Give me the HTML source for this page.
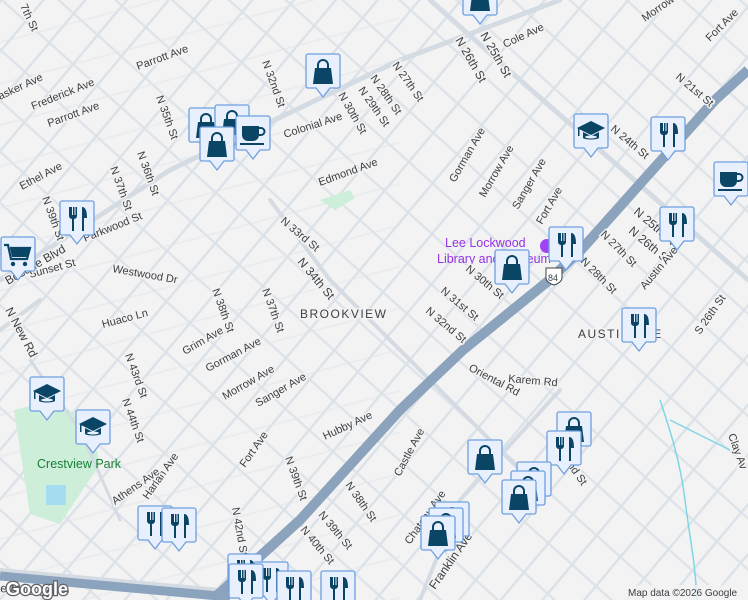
<!DOCTYPE html>
<html><head><meta charset="utf-8"><style>
html,body{margin:0;padding:0;width:748px;height:600px;overflow:hidden;background:#f4f3f4}
svg{display:block}
text{font-family:"Liberation Sans",sans-serif;font-size:11px;fill:#3c4043}
.l{stroke:#f4f3f4;stroke-width:3;paint-order:stroke}
</style></head><body>
<svg width="748" height="600" viewBox="0 0 748 600" xmlns="http://www.w3.org/2000/svg">
<defs>
<pattern id="pa" width="32" height="32" patternUnits="userSpaceOnUse" patternTransform="rotate(40)">
<rect x="0" y="0" width="2.5" height="32" fill="#dbe2e8"/></pattern>
<pattern id="pb" width="38" height="38" patternUnits="userSpaceOnUse" patternTransform="rotate(-48)">
<rect x="0" y="0" width="2.5" height="38" fill="#dbe2e8"/></pattern>
<pattern id="pc" width="40" height="40" patternUnits="userSpaceOnUse" patternTransform="rotate(-15)">
<rect x="0" y="0" width="40" height="2" fill="#dfe5ea"/></pattern>
<symbol id="mk" viewBox="0 0 36 46"><path d="M3 1h30a2 2 0 0 1 2 2v30a2 2 0 0 1-2 2h-8l-7 9-7-9H3a2 2 0 0 1-2-2V3a2 2 0 0 1 2-2z" fill="#e8f0fe" stroke="#6f9fe0" stroke-width="1.3"/></symbol>
<g id="shop"><use href="#mk" width="36" height="46"/><path d="M10 15h16l2 16H8z" fill="#0b4566"/><path d="M13 16v-4a5 5 0 0 1 10 0v4" fill="none" stroke="#0b4566" stroke-width="2"/></g>
<g id="food"><use href="#mk" width="36" height="46"/><path d="M10 7v9a3 3 0 0 0 3 3v12h2V19a3 3 0 0 0 3-3V7h-1.5v8h-1V7h-1.5v8h-1V7z" fill="#0b4566"/><path d="M23 31V7c4 0 5 5 5 11h-3v13z" fill="#0b4566"/></g>
<g id="cafe"><use href="#mk" width="36" height="46"/><path d="M7 11h17v9a6 6 0 0 1-6 6h-5a6 6 0 0 1-6-6z" fill="#0b4566"/><path d="M24 13h2a3 3 0 0 1 0 7h-2" fill="none" stroke="#0b4566" stroke-width="2"/><rect x="5" y="28" width="24" height="2" fill="#0b4566"/></g>
<g id="school"><use href="#mk" width="36" height="46"/><path d="M18 8L4 15l14 7 14-7z" fill="#0b4566"/><path d="M10 19v6c2 2 14 2 16 0v-6l-8 4z" fill="#0b4566"/><ellipse cx="18" cy="24" rx="6" ry="1.5" fill="#e8f0fe"/><rect x="5" y="15" width="1.5" height="8" fill="#0b4566"/></g>
<g id="cart"><use href="#mk" width="36" height="46"/><path d="M4 9h4l3 14h16l3-11H10" fill="none" stroke="#0b4566" stroke-width="2.2"/><path d="M10 12h19l-2 9H12z" fill="#0b4566"/><circle cx="13" cy="28" r="2.2" fill="#0b4566"/><circle cx="25" cy="28" r="2.2" fill="#0b4566"/></g>
</defs>
<rect width="748" height="600" fill="#f4f3f4"/>
<rect width="748" height="600" fill="url(#pa)"/>
<rect width="748" height="600" fill="url(#pb)" opacity="0.9"/>
<rect x="0" y="0" width="400" height="600" fill="url(#pc)" opacity="0.5"/>
<path d="M14 410l40-10 36 24 10 40-40 60-30-10z" fill="#cdeed8"/>
<rect x="46" y="485" width="20" height="20" fill="#a6dcef"/>
<path d="M320 200l30-10 5 8-20 12z" fill="#cdeed8"/>
<g fill="none" stroke="#d4dbe3" stroke-linecap="round">
<path d="M0 280L170 170 400 60 560 0" stroke-width="5"/>
<path d="M0 330L40 300" stroke-width="4"/>
<path d="M270 200L330 280 430 380 520 470" stroke-width="4"/>
<path d="M430 0L520 80 600 150 748 280" stroke-width="5"/>
<path d="M30 360L80 430 120 520" stroke-width="3"/>
<path d="M0 570L220 590" stroke-width="4"/>
<path d="M560 390L460 500 420 600" stroke-width="4"/>
</g>
<path d="M0 576L230 597" stroke="#8ca3bd" stroke-width="9" fill="none"/>
<path d="M212 600L300 520 400 410 463 350 547 282 581 250 715 100 748 70" stroke="#8ca3bd" stroke-width="10" fill="none" stroke-linejoin="round"/>
<path d="M660 400c10 30 20 60 25 100s10 60 12 100M670 420l60 30" stroke="#7fd6e6" stroke-width="1.5" fill="none"/>
<g>
<text class="l" x="300" y="318" style="letter-spacing:1.5px;font-size:12px">BROOKVIEW</text>
<text class="l" x="578" y="338" style="letter-spacing:1.5px;font-size:12px">AUSTIN AVE</text>
<text x="445" y="247" style="fill:#9334e6;font-size:12.5px">Lee Lockwood</text>
<text x="437" y="263" style="fill:#9334e6;font-size:12.5px">Library and Museum</text>
<circle cx="547" cy="246" r="7" fill="#a142f4"/>
<text x="37" y="468" style="fill:#188038;font-size:12.5px">Crestview Park</text>
<text class="l" transform="translate(320,186) rotate(-20)">Edmond Ave</text>
<text class="l" transform="translate(285,138) rotate(-18)">Colonial Ave</text>
<text class="l" transform="translate(297,262) rotate(50)" style="font-size:12px">N 34th St</text>
<text class="l" transform="translate(280,222) rotate(40)">N 33rd St</text>
<text class="l" transform="translate(138,70) rotate(-20)">Parrott Ave</text>
<text class="l" transform="translate(49,127) rotate(-20)">Parrott Ave</text>
<text class="l" transform="translate(33,110) rotate(-22)">Frederick Ave</text>
<text class="l" transform="translate(0,100) rotate(-25)">asker Ave</text>
<text class="l" transform="translate(85,242) rotate(-22)">Parkwood St</text>
<text class="l" transform="translate(30,278) rotate(-15)">Sunset St</text>
<text class="l" transform="translate(112,272) rotate(10)">Westwood Dr</text>
<text class="l" transform="translate(103,328) rotate(-15)">Huaco Ln</text>
<text class="l" transform="translate(22,190) rotate(-28)">Ethel Ave</text>
<text class="l" transform="translate(8,285) rotate(-30)" style="font-size:12px">Bosque Blvd</text>
<text class="l" transform="translate(5,310) rotate(62)" style="font-size:12px">N New Rd</text>
<text class="l" transform="translate(185,355) rotate(-30)">Grim Ave</text>
<text class="l" transform="translate(208,372) rotate(-28)">Gorman Ave</text>
<text class="l" transform="translate(225,400) rotate(-30)">Morrow Ave</text>
<text class="l" transform="translate(258,407) rotate(-30)">Sanger Ave</text>
<text class="l" transform="translate(245,468) rotate(-55)">Fort Ave</text>
<text class="l" transform="translate(148,500) rotate(-55)">Harlan Ave</text>
<text class="l" transform="translate(115,505) rotate(-35)">Athens Ave</text>
<text class="l" transform="translate(325,440) rotate(-25)">Hubby Ave</text>
<text class="l" transform="translate(400,477) rotate(-62)">Castle Ave</text>
<text class="l" transform="translate(410,545) rotate(-55)">Chateau Ave</text>
<text class="l" transform="translate(435,590) rotate(-55)" style="font-size:12px">Franklin Ave</text>
<text class="l" transform="translate(468,370) rotate(28)">Oriental Rd</text>
<text class="l" transform="translate(508,382) rotate(5)">Karem Rd</text>
<text class="l" transform="translate(440,292) rotate(40)">N 31st St</text>
<text class="l" transform="translate(425,312) rotate(40)">N 32nd St</text>
<text class="l" transform="translate(465,270) rotate(40)">N 30th St</text>
<text class="l" transform="translate(455,183) rotate(-60)">Gorman Ave</text>
<text class="l" transform="translate(485,198) rotate(-60)">Morrow Ave</text>
<text class="l" transform="translate(518,210) rotate(-60)">Sanger Ave</text>
<text class="l" transform="translate(542,225) rotate(-60)">Fort Ave</text>
<text class="l" transform="translate(600,235) rotate(45)">N 27th St</text>
<text class="l" transform="translate(580,262) rotate(45)">N 28th St</text>
<text class="l" transform="translate(633,213) rotate(40)" style="font-size:12px">N 25th St</text>
<text class="l" transform="translate(628,232) rotate(40)" style="font-size:12px">N 26th St</text>
<text class="l" transform="translate(610,130) rotate(40)">N 24th St</text>
<text class="l" transform="translate(675,78) rotate(40)">N 21st St</text>
<text class="l" transform="translate(645,290) rotate(-50)">Austin Ave</text>
<text class="l" transform="translate(700,335) rotate(-55)">S 26th St</text>
<text class="l" transform="translate(728,435) rotate(70)">Clay Av</text>
<text class="l" transform="translate(505,48) rotate(-25)">Cole Ave</text>
<text class="l" transform="translate(645,22) rotate(-35)">Morrow Av</text>
<text class="l" transform="translate(710,42) rotate(-45)">Fort Ave</text>
<text class="l" transform="translate(455,40) rotate(60)" style="font-size:12px">N 26th St</text>
<text class="l" transform="translate(480,35) rotate(60)" style="font-size:12px">N 25th St</text>
<text class="l" transform="translate(392,65) rotate(55)">N 27th St</text>
<text class="l" transform="translate(370,78) rotate(55)">N 28th St</text>
<text class="l" transform="translate(358,90) rotate(55)">N 29th St</text>
<text class="l" transform="translate(338,95) rotate(60)">N 30th St</text>
<text class="l" transform="translate(262,62) rotate(70)">N 32nd St</text>
<text class="l" transform="translate(156,97) rotate(70)">N 35th St</text>
<text class="l" transform="translate(137,153) rotate(70)">N 36th St</text>
<text class="l" transform="translate(110,168) rotate(70)">N 37th St</text>
<text class="l" transform="translate(42,198) rotate(70)">N 39th St</text>
<text class="l" transform="translate(212,290) rotate(70)">N 38th St</text>
<text class="l" transform="translate(262,290) rotate(70)">N 37th St</text>
<text class="l" transform="translate(125,355) rotate(70)">N 43rd St</text>
<text class="l" transform="translate(122,400) rotate(70)">N 44th St</text>
<text class="l" transform="translate(285,458) rotate(70)">N 39th St</text>
<text class="l" transform="translate(232,508) rotate(80)">N 42nd St</text>
<text class="l" transform="translate(345,485) rotate(55)">N 38th St</text>
<text class="l" transform="translate(318,515) rotate(50)">N 39th St</text>
<text class="l" transform="translate(300,530) rotate(50)">N 40th St</text>
<text class="l" transform="translate(560,455) rotate(55)">32nd St</text>
<text class="l" transform="translate(0,592) rotate(5)" style="font-size:12px">e Mills Dr</text>
<text class="l" transform="translate(20,6) rotate(65)">7th St</text>
</g>
<path d="M546 268h16v10c0 3-4 6-8 7-4-1-8-4-8-7z" fill="#fff" stroke="#3c4043"/>
<text x="548" y="281" style="font-size:9px">84</text>
<use href="#shop" x="462" y="-20"/>
<use href="#shop" x="305" y="53"/>
<use href="#shop" x="188" y="107"/>
<use href="#shop" x="214" y="104"/>
<use href="#cafe" x="235" y="115"/>
<use href="#shop" x="199" y="126"/>
<use href="#school" x="573" y="113"/>
<use href="#food" x="650" y="116"/>
<use href="#cafe" x="713" y="161"/>
<use href="#food" x="659" y="206"/>
<use href="#food" x="548" y="226"/>
<use href="#shop" x="494" y="249"/>
<use href="#food" x="621" y="307"/>
<use href="#cart" x="0" y="236"/>
<use href="#food" x="59" y="200"/>
<use href="#school" x="29" y="376"/>
<use href="#school" x="75" y="409"/>
<use href="#food" x="137" y="505"/>
<use href="#food" x="161" y="507"/>
<use href="#shop" x="556" y="411"/>
<use href="#food" x="546" y="430"/>
<use href="#shop" x="467" y="439"/>
<use href="#shop" x="516" y="461"/>
<use href="#shop" x="510" y="470"/>
<use href="#shop" x="501" y="479"/>
<use href="#shop" x="434" y="501"/>
<use href="#shop" x="428" y="507"/>
<use href="#shop" x="420" y="515"/>
<use href="#food" x="227" y="553"/>
<use href="#food" x="253" y="561"/>
<use href="#food" x="228" y="563"/>
<use href="#food" x="276" y="570"/>
<use href="#food" x="320" y="570"/>
<text x="6" y="595" style="font-size:18px;font-weight:bold;fill:#fff;stroke:#5f6368;stroke-width:2.5;paint-order:stroke">Google</text>
<rect x="622" y="585" width="126" height="15" fill="#f4f3f4" opacity="0.8"/>
<text x="628" y="596" style="font-size:10px;fill:#3c4043">Map data ©2026 Google</text>
</svg>
</body></html>
